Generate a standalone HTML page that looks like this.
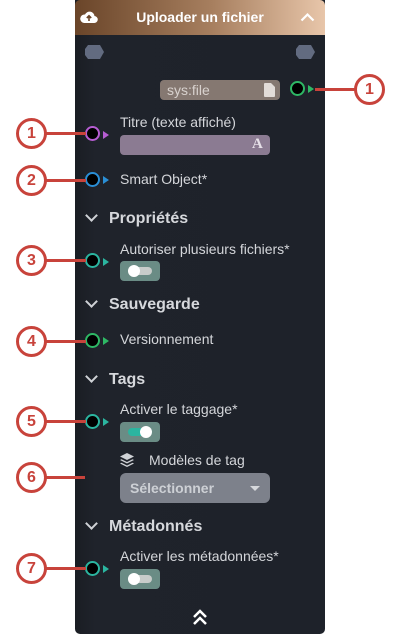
<!DOCTYPE html>
<html><head><meta charset="utf-8"><style>
*{margin:0;padding:0;box-sizing:border-box}
body{width:400px;height:634px;background:#fff;position:relative;overflow:hidden;font-family:"Liberation Sans",sans-serif}
.panel{position:absolute;left:75px;top:0;width:250px;height:634px;background:linear-gradient(90deg,#1a1d23 0,#1f232b 20px,#1e222a 100%);border-radius:0 0 5px 5px}
.hdr{position:absolute;left:75px;top:0;width:250px;height:35px;background:linear-gradient(90deg,#6a4529,#a77f5f 55%,#e8c6aa);border-radius:5px 5px 0 0;color:#fff;font-weight:bold;font-size:14px;text-align:center;line-height:35px}
.t{position:absolute;color:#d4d6da;font-size:14px;white-space:nowrap}
.h{position:absolute;color:#d6d8dc;font-size:16px;font-weight:bold;white-space:nowrap}
.port{position:absolute;width:15px;height:15px;border-radius:50%;background:#000;border:2px solid}
.tri{position:absolute;width:0;height:0;border-top:4px solid transparent;border-bottom:4px solid transparent;border-left:6px solid}
.co{position:absolute;width:31px;height:31px;border-radius:50%;border:3px solid #c8433b;background:#fff;color:#c8433b;font-weight:bold;font-size:16px;text-align:center;line-height:25px}
.ln{position:absolute;height:3px;background:#c8433b}
.tog{position:absolute;width:40px;height:20px;border-radius:4px;background:#6a8c85}
.tog i{position:absolute;top:6px;left:8px;width:24px;height:8px;border-radius:4px;background:#c8ccca}
.tog b{position:absolute;top:4px;width:12px;height:12px;border-radius:50%;background:#fff}
.chev{position:absolute;width:9px;height:9px;border-right:2px solid #cfd2d6;border-bottom:2px solid #cfd2d6;transform:rotate(45deg)}
</style></head><body>
<div class="panel"></div>
<div class="hdr">Uploader un fichier</div>
<svg style="position:absolute;left:80px;top:10px" width="18" height="14" viewBox="0 0 18 14"><path d="M4 13h10a3.5 3.5 0 0 0 .5-7A5 5 0 0 0 5 4.5 4 4 0 0 0 4 13z" fill="#fff"/><path d="M9 11V6M6.8 8 9 5.8 11.2 8" stroke="#6a4529" stroke-width="1.6" fill="none"/></svg>
<svg style="position:absolute;left:300px;top:12px" width="15" height="10" viewBox="0 0 15 10"><path d="M1.5 8.5 7.5 2.5 13.5 8.5" stroke="#fff" stroke-width="2.2" fill="none"/></svg>
<svg style="position:absolute;left:85px;top:45px" width="20" height="14"><polygon points="3,0 15,0 19,7 15,14 3,14 0,10 0,4" fill="#626b80"/></svg>
<svg style="position:absolute;left:296px;top:45px" width="20" height="14"><polygon points="3,0 15,0 19,7 15,14 3,14 0,10 0,4" fill="#626b80"/></svg>
<div style="position:absolute;left:160px;top:80px;width:120px;height:20px;border-radius:4px;background:#857871;color:#d8d2ce;font-size:14px;line-height:20px;padding-left:7px">sys:file</div>
<svg style="position:absolute;left:264px;top:83px" width="11" height="14"><path d="M0 1a1 1 0 0 1 1-1h6l4 4v9a1 1 0 0 1-1 1H1a1 1 0 0 1-1-1z" fill="#e2dcd8"/></svg>
<div class="port" style="left:290px;top:81px;border-color:#2eb865"></div>
<div class="tri" style="left:308px;top:85px;border-left-color:#2eb865"></div>
<div class="ln" style="left:315px;top:88px;width:40px"></div>
<div class="co" style="left:354px;top:74px">1</div>

<div class="t" style="left:120px;top:114px">Titre (texte affiché)</div>
<div style="position:absolute;left:120px;top:135px;width:150px;height:20px;border-radius:4px;background:#8b7b92"></div>
<div style="position:absolute;left:252px;top:136px;color:#e6e0e8;font-family:'Liberation Serif',serif;font-weight:bold;font-size:15px">A</div>
<div class="port" style="left:85px;top:126px;border-color:#b65dd2"></div>
<div class="tri" style="left:103px;top:131px;border-left-color:#b65dd2"></div>
<div class="ln" style="left:45px;top:132px;width:41px"></div>
<div class="co" style="left:16px;top:118px">1</div>

<div class="t" style="left:120px;top:171px">Smart Object*</div>
<div class="port" style="left:85px;top:172px;border-color:#2a8fd6"></div>
<div class="tri" style="left:103px;top:176px;border-left-color:#2a8fd6"></div>
<div class="ln" style="left:45px;top:179px;width:41px"></div>
<div class="co" style="left:16px;top:165px">2</div>

<div class="chev" style="left:87px;top:211px"></div>
<div class="h" style="left:109px;top:210px">Propriétés</div>
<div class="t" style="left:120px;top:241px">Autoriser plusieurs fichiers*</div>
<div class="tog" style="left:120px;top:261px"><i></i><b style="left:8px"></b></div>
<div class="port" style="left:85px;top:253px;border-color:#2bb5a0"></div>
<div class="tri" style="left:103px;top:258px;border-left-color:#2bb5a0"></div>
<div class="ln" style="left:45px;top:259px;width:41px"></div>
<div class="co" style="left:16px;top:245px">3</div>

<div class="chev" style="left:87px;top:297px"></div>
<div class="h" style="left:109px;top:296px">Sauvegarde</div>
<div class="t" style="left:120px;top:331px">Versionnement</div>
<div class="port" style="left:85px;top:333px;border-color:#2eb865"></div>
<div class="tri" style="left:103px;top:337px;border-left-color:#2eb865"></div>
<div class="ln" style="left:45px;top:340px;width:41px"></div>
<div class="co" style="left:16px;top:326px">4</div>

<div class="chev" style="left:87px;top:372px"></div>
<div class="h" style="left:109px;top:371px">Tags</div>
<div class="t" style="left:120px;top:401px">Activer le taggage*</div>
<div class="tog" style="left:120px;top:422px"><i style="background:#2bb5a0"></i><b style="left:20px"></b></div>
<div class="port" style="left:85px;top:414px;border-color:#2bb5a0"></div>
<div class="tri" style="left:103px;top:418px;border-left-color:#2bb5a0"></div>
<div class="ln" style="left:45px;top:420px;width:41px"></div>
<div class="co" style="left:16px;top:406px">5</div>

<svg style="position:absolute;left:120px;top:453px" width="14" height="14" viewBox="0 0 14 14"><path d="M7 0 14 3.5 7 7 0 3.5z" fill="#cfd2d6"/><path d="M1.5 6.3 7 9 12.5 6.3 14 7 7 10.5 0 7zM1.5 9.8 7 12.5 12.5 9.8 14 10.5 7 14 0 10.5z" fill="#cfd2d6"/></svg>
<div class="t" style="left:149px;top:452px">Modèles de tag</div>
<div style="position:absolute;left:120px;top:473px;width:150px;height:30px;border-radius:6px;background:#7d818b;color:#cdd0d5;font-weight:bold;font-size:14px;line-height:30px;padding-left:10px">Sélectionner</div>
<div style="position:absolute;left:250px;top:486px;border-left:5px solid transparent;border-right:5px solid transparent;border-top:5px solid #d6d8dc"></div>
<div class="ln" style="left:45px;top:476px;width:40px"></div>
<div class="co" style="left:16px;top:462px">6</div>

<div class="chev" style="left:87px;top:519px"></div>
<div class="h" style="left:109px;top:518px">Métadonnés</div>
<div class="t" style="left:120px;top:548px">Activer les métadonnées*</div>
<div class="tog" style="left:120px;top:569px"><i></i><b style="left:8px"></b></div>
<div class="port" style="left:85px;top:561px;border-color:#2bb5a0"></div>
<div class="tri" style="left:103px;top:565px;border-left-color:#2bb5a0"></div>
<div class="ln" style="left:45px;top:567px;width:41px"></div>
<div class="co" style="left:16px;top:553px">7</div>

<svg style="position:absolute;left:192px;top:609px" width="16" height="18" viewBox="0 0 16 18"><path d="M2 8 8 2 14 8M2 15 8 9 14 15" stroke="#fff" stroke-width="2.5" fill="none"/></svg>
</body></html>
